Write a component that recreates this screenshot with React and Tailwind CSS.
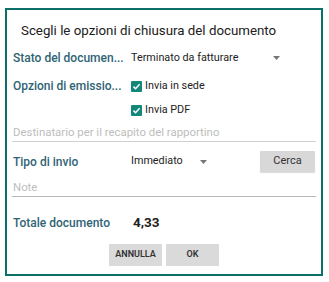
import React from "react";

function Caret() {
  return (
    <svg width="7" height="4" viewBox="0 0 7 4" className="block">
      <path d="M0 0 L7 0 L3.5 4 Z" fill="#757575" />
    </svg>
  );
}

function Check() {
  return (
    <div className="w-[11px] h-[11px] bg-[#12887a] rounded-[1px] flex items-center justify-center">
      <svg width="9" height="9" viewBox="0 0 9 9">
        <path d="M1.5 4.6 L3.6 6.7 L7.6 2.3" stroke="#fff" strokeWidth="1.5" fill="none" />
      </svg>
    </div>
  );
}

export default function App() {
  return (
    <div className="w-[329px] h-[282px] bg-white pt-[8px] pl-[5px]" style={{ fontFamily: "Roboto, 'Noto Sans', sans-serif" }}>
      <div className="w-[318px] h-[268px] border-2 border-[#0b7069] flex flex-col whitespace-nowrap">
        <div className="h-[36px] pl-[14px] pt-[13px] text-[13.3px] leading-[16px] text-[#202020]">
          Scegli le opzioni di chiusura del documento
        </div>
        <div className="h-[24px] flex items-center pl-[6px]">
          <div className="w-[118px] text-[12px] font-medium text-[#2f6474]">Stato del documen...</div>
          <div className="w-[142px] text-[10.8px] text-[#222]">Terminato da fatturare</div>
          <Caret />
        </div>
        <div className="h-[32px] flex items-center pl-[6px]">
          <div className="w-[118px] text-[12px] font-medium text-[#2f6474]">Opzioni di emissio...</div>
          <Check />
          <div className="ml-[3px] text-[10.8px] text-[#222]">Invia in sede</div>
        </div>
        <div className="h-[16px] flex items-center pl-[124px]">
          <Check />
          <div className="ml-[3px] text-[10.8px] text-[#222]">Invia PDF</div>
        </div>
        <div className="mx-[5px] h-[24px] border-b border-[#d0d0d0] flex items-end pb-[1px] pl-[1px] text-[11.4px] leading-[15px] text-[#bdbdbd]">
          Destinatario per il recapito del rapportino
        </div>
        <div className="h-[38px] flex items-center pl-[6px] pt-[1px]">
          <div className="w-[118px] text-[12px] font-medium text-[#2f6474]">Tipo di invio</div>
          <div className="w-[69px] text-[10.8px] text-[#222]">Immediato</div>
          <Caret />
          <div className="ml-auto mr-[6px] w-[55px] h-[21px] bg-[#d8d8d8] shadow-[0_1px_1px_rgba(0,0,0,0.15)] rounded-[1px] flex items-center justify-center text-[11px] text-[#333]">
            Cerca
          </div>
        </div>
        <div className="mx-[5px] h-[17px] border-b border-[#b8b8b8] flex items-end pb-[1px] pl-[1px] text-[11.4px] leading-[15px] text-[#bdbdbd]">
          Note
        </div>
        <div className="h-[47px] flex items-center pl-[6px] pt-[4px]">
          <div className="w-[120px] text-[12px] font-medium text-[#2f6474]">Totale documento</div>
          <div className="text-[13.5px] font-bold text-[#222]">4,33</div>
        </div>
        <div className="flex justify-center gap-[4px]">
          <div className="w-[53px] h-[22px] bg-[#dadada] flex items-center justify-center text-[9px] font-semibold text-[#333]">ANNULLA</div>
          <div className="w-[53px] h-[22px] bg-[#dadada] flex items-center justify-center text-[9px] font-semibold text-[#333]">OK</div>
        </div>
      </div>
    </div>
  );
}
